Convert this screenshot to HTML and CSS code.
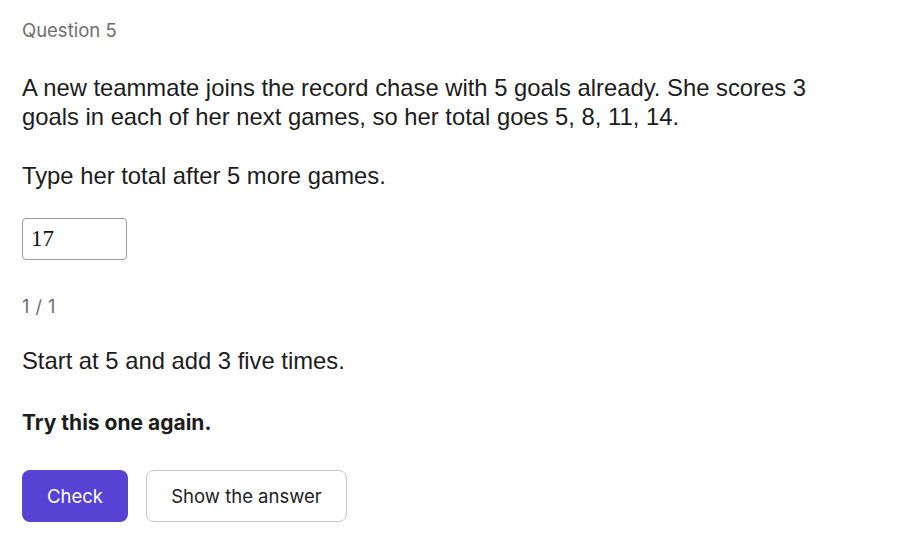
FILE: index.html
```html
<!DOCTYPE html>
<html>
<head>
<meta charset="utf-8">
<link rel="stylesheet" href="styles.css">
</head>
<body>
<main class="quiz">
  <div class="qlabel">Question 5</div>
  <p class="prompt first">A new teammate joins the record chase with 5 goals already. She scores 3 goals in each of her next games, so her total goes 5, 8, 11, 14.</p>
  <p class="prompt">Type her total after 5 more games.</p>
  <input class="answer" type="text" value="17">
  <div class="count">1 / 1</div>
  <p class="prompt hint">Start at 5 and add 3 five times.</p>
  <p class="feedback">Try this one again.</p>
  <div class="actions">
    <button class="btn primary">Check</button>
    <button class="btn secondary">Show the answer</button>
  </div>
</main>
</body>
</html>
```
FILE: styles.css
```css
html, body { margin: 0; padding: 0; background: #ffffff; }
.quiz {
  padding: 19px 22px;
  display: flex;
  flex-direction: column;
  align-items: flex-start;
}
.qlabel {
  font-family: Inter, "Liberation Sans", sans-serif;
  font-size: 18.5px;
  color: #6e6e6e;
  line-height: 22px;
}
.prompt {
  font-family: "Liberation Sans", Arial, sans-serif;
  font-size: 23.8px;
  line-height: 29px;
  color: #1c1c1c;
  margin: 30px 0 0 0;
  max-width: 820px;
}
.prompt.first { margin-top: 31.5px; }
.answer {
  margin-top: 28.5px;
  width: 105px;
  height: 42px;
  box-sizing: border-box;
  border: 1px solid #9a9a9a;
  border-radius: 4px;
  padding: 0 8px;
  font-family: "Liberation Serif", serif;
  font-size: 23px;
  color: #111;
}
.count {
  margin-top: 36px;
  font-family: Inter, "Liberation Sans", sans-serif;
  font-size: 18px;
  color: #6e6e6e;
  line-height: 22px;
  word-spacing: 1px;
}
.hint { margin-top: 27.5px; }
.feedback {
  margin: 36.5px 0 0 0;
  font-family: Inter, "Liberation Sans", sans-serif;
  font-weight: 700;
  font-size: 21px;
  line-height: 24px;
  color: #1c1c1c;
}
.actions {
  margin-top: 35px;
  display: flex;
  gap: 18px;
}
.btn {
  height: 52px;
  border-radius: 8px;
  font-family: Inter, "Liberation Sans", sans-serif;
  font-size: 18.5px;
  padding: 0;
  cursor: pointer;
}
.primary {
  background: #5842d4;
  color: #ffffff;
  border: none;
  width: 106px;
}
.secondary {
  background: #ffffff;
  color: #1c1c1c;
  border: 1px solid #c8c8c8;
  width: 201px;
}
```
